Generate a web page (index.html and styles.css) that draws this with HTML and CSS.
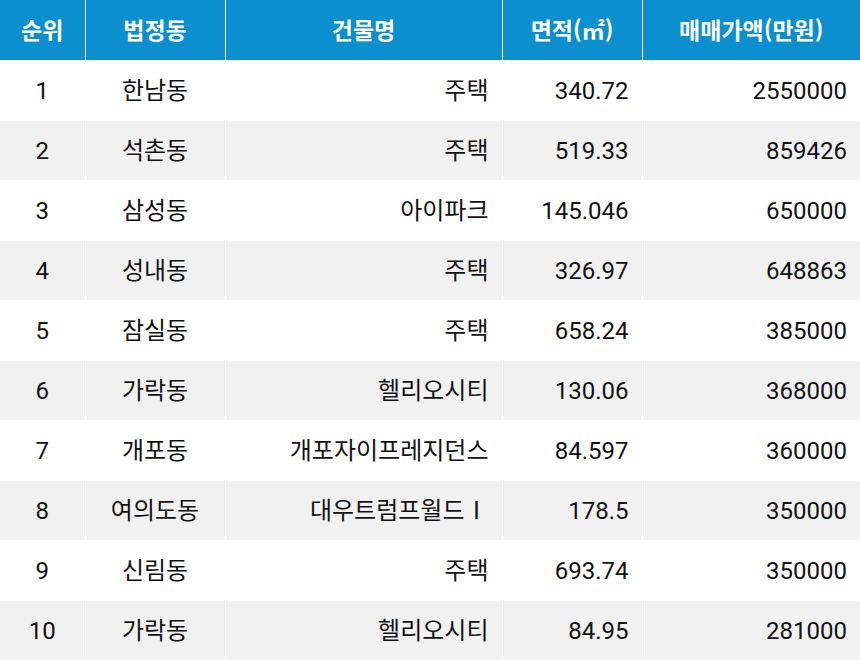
FILE: index.html
```html
<!DOCTYPE html>
<html lang="ko">
<head>
<meta charset="utf-8">
<link rel="stylesheet" href="styles.css">
</head>
<body>
<table class="rank">
  <colgroup>
    <col class="c1"><col class="c2"><col class="c3"><col class="c4"><col class="c5">
  </colgroup>
  <thead>
    <tr><th>순위</th><th>법정동</th><th>건물명</th><th>면적(㎡)</th><th>매매가액(만원)</th></tr>
  </thead>
  <tbody>
    <tr><td class="ctr">1</td><td class="ctr">한남동</td><td>주택</td><td>340.72</td><td>2550000</td></tr>
    <tr><td class="ctr">2</td><td class="ctr">석촌동</td><td>주택</td><td>519.33</td><td>859426</td></tr>
    <tr><td class="ctr">3</td><td class="ctr">삼성동</td><td>아이파크</td><td>145.046</td><td>650000</td></tr>
    <tr><td class="ctr">4</td><td class="ctr">성내동</td><td>주택</td><td>326.97</td><td>648863</td></tr>
    <tr><td class="ctr">5</td><td class="ctr">잠실동</td><td>주택</td><td>658.24</td><td>385000</td></tr>
    <tr><td class="ctr">6</td><td class="ctr">가락동</td><td>헬리오시티</td><td>130.06</td><td>368000</td></tr>
    <tr><td class="ctr">7</td><td class="ctr">개포동</td><td>개포자이프레지던스</td><td>84.597</td><td>360000</td></tr>
    <tr><td class="ctr">8</td><td class="ctr">여의도동</td><td>대우트럼프월드Ⅰ</td><td>178.5</td><td>350000</td></tr>
    <tr><td class="ctr">9</td><td class="ctr">신림동</td><td>주택</td><td>693.74</td><td>350000</td></tr>
    <tr><td class="ctr">10</td><td class="ctr">가락동</td><td>헬리오시티</td><td>84.95</td><td>281000</td></tr>
  </tbody>
</table>
</body>
</html>
```

FILE: styles.css
```css
html, body {
  margin: 0;
  padding: 0;
  background: #ffffff;
}
body {
  font-family: Roboto, "Noto Sans CJK KR", sans-serif;
  color: #111111;
}
.rank {
  width: 860px;
  border-collapse: collapse;
  table-layout: fixed;
  font-size: 24px;
}
.c1 { width: 85px; }
.c2 { width: 140px; }
.c3 { width: 277px; }
.c4 { width: 140px; }
.c5 { width: 218px; }
.rank th, .rank td {
  border: 1px solid #ffffff;
  height: 60px;
  padding: 2px 13px 0 0;
  line-height: 1;
  box-sizing: border-box;
}
.rank th {
  background: #0b8fce;
  color: #ffffff;
  font-family: "Noto Sans CJK KR", sans-serif;
  font-size: 23px;
  font-weight: 700;
  text-align: center;
  padding: 0;
  border-top: none;
}
.rank td {
  text-align: right;
}
.rank td.ctr {
  text-align: center;
  padding-right: 0;
}
.rank tbody tr:nth-child(even) td {
  background: #f1f1f1;
}
.rank th:first-child, .rank td:first-child { border-left: none; }
.rank th:last-child, .rank td:last-child { border-right: none; }
```
